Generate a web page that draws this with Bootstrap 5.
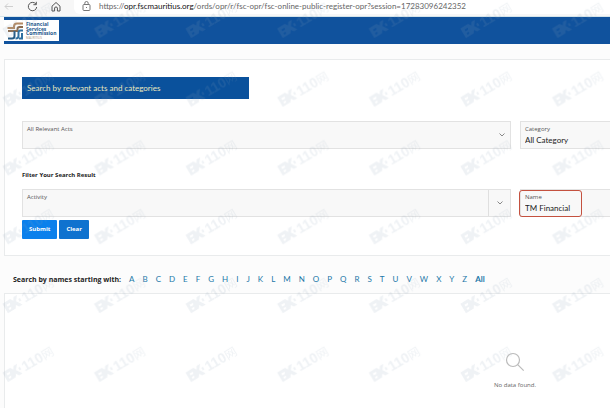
<!DOCTYPE html>
<html lang="en">
<head>
<meta charset="utf-8">
<meta name="viewport" content="width=device-width, initial-scale=1">
<title>FSC Online Public Register</title>
<link href="https://cdn.jsdelivr.net/npm/bootstrap@5.3.0/dist/css/bootstrap.min.css" rel="stylesheet">
<style>
body { font-family: "Open Sans", "Noto Sans", sans-serif; font-size: 7px; line-height: 10px; color: #333; background: #fcfcfc; }
.browser-bar { height: 17px; background: #f7f7f7; border-bottom: 1px solid #d5e4ea; padding-left: 4px; gap: 13px; }
.browser-bar button { border: 0; background: none; padding: 0; line-height: 0; }
.address { background: #fff; height: 14px; padding-left: 8px; border-radius: 0 0 0 6px; }
.url { font-family: Lato, sans-serif; font-size: 8px; line-height: 13px; color: #666; padding-left: 8px; white-space: nowrap; }
.url span { color: #111; }
.site-head { background: #10529d; padding: 3px 0; height: 27px; margin-left: 4px; }
.brand-box { background: #fff; width: 55px; height: 21px; }
.panel { background: #fff; border: 1px solid #e9ebec; border-right: 0; margin-left: 4px; }
.results { border-bottom: 0; }
.search-panel { margin-top: 15px; padding: 17px 0 16px 17px; }
.banner { font-family: Lato, sans-serif; font-size: 8px; background: #0a519c; color: #ece9bd; width: 38.6%; padding: 6px 5px; margin-bottom: 22px; }
.form-line { display: grid; grid-template-columns: 489fr 90fr; gap: 9px; }
.field { background: #f8f8f8; border: 1px solid #e2e2e2; height: 28px; padding: 2px 4px 0 4px; position: relative; }
.field label { display: block; font-size: 6px; line-height: 11px; color: #555; }
.field input, .field select { display: block; width: 100%; border: 0; padding: 0; background: none; font-family: Lato, sans-serif; font-size: 8px; line-height: 11px; height: 11px; color: #222; appearance: none; outline: 0; }
.field.cut { border-right: 0; }
.inner { padding: 2px 4px 0; }
.chev { width: 22px; border: 0; border-left: 1px solid #dfdfdf; background: none; padding: 0; }
.filter-title { font-size: 6px; line-height: 10px; font-weight: 700; color: #222; margin: 21px 0 9px; }
.marked { position: absolute; inset: 0 auto -1px -2px; width: 63px; border: 1px solid #c4513f; border-radius: 3px; }
.acts { margin-top: 3px; gap: 2px; }
.act { border: 0; border-radius: 1px; color: #fff; font-size: 6px; font-weight: 700; line-height: 11px; padding: 4px 7px; background: #0b80ec; }
.act-alt { background: #0f72cf; }
.letters { padding: 18px 0 8px 13px; gap: 8px; font-family: Lato, sans-serif; font-size: 8px; line-height: 11px; }
.letters a { color: #2378a8; text-decoration: none; }
.letters strong { font-family: "Open Sans", sans-serif; font-size: 7px; color: #222; }
.empty { width: 31.4%; padding-top: 58px; color: #666; font-size: 6px; }
.wm { position: fixed; inset: 0; width: 100%; height: 100%; pointer-events: none; z-index: 10; }
</style>
<script src="https://cdn.jsdelivr.net/npm/bootstrap@5.3.0/dist/js/bootstrap.bundle.min.js"></script>
</head>
<body class="d-flex flex-column min-vh-100 overflow-hidden">
<div class="browser-bar d-flex align-items-start">
  <button type="button" aria-label="Back"><svg width="10" height="14" viewBox="0 0 10 14" fill="none" stroke="#cfcfcf"><path d="M9 6.500H1M4 3.500L1 6.500l3 3"/></svg></button>
  <button type="button" aria-label="Reload"><svg width="11" height="14" viewBox="0 0 11 14" fill="none" stroke="#555"><path d="M9 4.200A4.200 4.200 0 1 0 9.700 7M9.300 1.800v2.900H6.400"/></svg></button>
  <button type="button" aria-label="Home"><svg width="10" height="14" viewBox="0 0 10 14" fill="none" stroke="#555"><path d="M1 6.200L5 2.500l4 3.700V11H6.400V8q0-1-1.400-1T3.600 8v3H1z"/></svg></button>
  <div class="address d-flex flex-grow-1">
    <svg width="9" height="13" viewBox="0 0 9 13" fill="none" stroke="#777"><rect x="1" y="4.500" width="7" height="6" rx="1"/><path d="M2.800 4.500V3.200a1.700 1.700 0 0 1 3.400 0v1.300M4.500 7v1"/></svg>
    <div class="url">https://<span>opr.fscmauritius.org</span>/ords/opr/r/fsc-opr/fsc-online-public-register-opr?session=17283096242352</div>
  </div>
</div>
<header class="site-head">
  <a class="brand-box d-block" href="#" aria-label="Financial Services Commission Mauritius">
    <svg class="d-block" width="55" height="21" viewBox="0 0 55 21">
      <g fill="none" stroke-width="2">
        <path stroke="#b58a62" d="M19 3.500h-6q-3 0-3 3v1.500H3.500"/>
        <path stroke="#8b6a4c" d="M19 7h-3.500q-2 0-2 2v2H4"/>
        <path stroke="#245a86" d="M10.500 11v5q0 2.500-2.500 2.500H4"/>
        <path stroke="#2f6f9f" d="M19 10.500h-2.500q-2 0-2 2V16q0 2.500-3 2.500M18 13v5.500h-3"/>
      </g>
      <g font-family="Open Sans, sans-serif" font-weight="700" font-size="5" fill="#24588c">
        <text x="22" y="6">Financial</text><text x="22" y="10.500">Services</text><text x="22" y="15">Commission</text>
      </g>
      <text x="22" y="19" font-family="Open Sans, sans-serif" font-size="3" fill="#a98f7a">MAURITIUS</text>
    </svg>
  </a>
</header>
<main class="d-flex flex-column flex-grow-1">
  <form class="panel search-panel">
    <div class="banner">Search by relevant acts and categories</div>
    <div class="form-line">
      <div class="field">
        <label for="acts">All Relevant Acts</label>
        <select id="acts"><option></option></select>
        <svg class="position-absolute top-50 end-0 translate-middle-y me-1" width="8" height="6" viewBox="0 0 8 6" fill="none" stroke="#888"><path d="M1.500 1.500L4 4l2.500-2.500"/></svg>
      </div>
      <div class="field cut">
        <label for="cat">Category</label>
        <select id="cat"><option>All Category</option></select>
      </div>
    </div>
    <h2 class="filter-title">Filter Your Search Result</h2>
    <div class="form-line">
      <div class="field d-flex p-0">
        <div class="inner flex-grow-1">
          <label for="activity">Activity</label>
          <input id="activity" type="text">
        </div>
        <button class="chev" type="button" aria-label="Show activities"><svg width="8" height="6" viewBox="0 0 8 6" fill="none" stroke="#888"><path d="M1.500 1.500L4 4l2.500-2.500"/></svg></button>
      </div>
      <div class="field cut">
        <label for="nm">Name</label>
        <input id="nm" type="text" value="TM Financial">
        <span class="marked"></span>
      </div>
    </div>
    <div class="acts d-flex">
      <button class="act" type="submit">Submit</button>
      <button class="act act-alt" type="reset">Clear</button>
    </div>
  </form>
  <nav class="letters d-flex" aria-label="Names by first letter">
    <strong>Search by names starting with:</strong>
    <a href="#">A</a><a href="#">B</a><a href="#">C</a><a href="#">D</a><a href="#">E</a><a href="#">F</a><a href="#">G</a><a href="#">H</a><a href="#">I</a><a href="#">J</a><a href="#">K</a><a href="#">L</a><a href="#">M</a><a href="#">N</a><a href="#">O</a><a href="#">P</a><a href="#">Q</a><a href="#">R</a><a href="#">S</a><a href="#">T</a><a href="#">U</a><a href="#">V</a><a href="#">W</a><a href="#">X</a><a href="#">Y</a><a href="#">Z</a><a href="#" class="fw-bold">All</a>
  </nav>
  <section class="panel results flex-grow-1">
    <div class="empty ms-auto text-center">
      <svg class="d-block mx-auto mb-2" width="20" height="20" viewBox="0 0 20 20" fill="none" stroke="#bbb" stroke-width="1.200"><circle cx="8" cy="8" r="6.500"/><path d="M12.700 12.700l6 6"/></svg>
      No data found.
    </div>
  </section>
</main>
<svg class="wm" aria-hidden="true">
  <defs>
    <pattern id="wmark" width="91.600" height="68.800" patternUnits="userSpaceOnUse" x="0" y="-28">
      <g transform="translate(8 66) rotate(-31)" fill="#8fa5b8" fill-opacity=".14">
        <path fill-rule="evenodd" d="M0-11h9l2 3 2-3h4l-4 5 4 6h-4l-2-3-2 3H0zM3-8v2h3l1-2zM3-4v2h2l1-2zM16-7h2v3h-2z"/>
        <text x="20" y="0" font-family="Liberation Sans, Noto Sans CJK SC, sans-serif" font-size="14" font-weight="700">110<tspan font-size="12" font-weight="400">网</tspan></text>
      </g>
    </pattern>
  </defs>
  <rect width="100%" height="100%" fill="url(#wmark)"/>
</svg>
</body>
</html>
